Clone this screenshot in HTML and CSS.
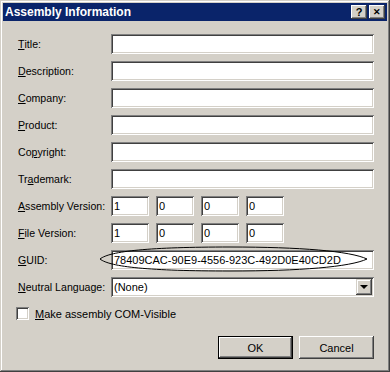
FILE: index.html
```html
<!DOCTYPE html>
<html lang="en">
<head>
  <title>Assembly Information</title>
  <link rel="stylesheet" href="styles.css">
</head>
<body>
  <div class="window">
    <div class="titlebar">
      <span class="title">Assembly Information</span>
      <div class="caption-buttons">
        <span class="cap-btn">?</span>
        <span class="cap-btn cap-close">&#x2715;</span>
      </div>
    </div>

    <div class="form">
      <label><u>T</u>itle:</label>
      <div class="field"></div>

      <label><u>D</u>escription:</label>
      <div class="field"></div>

      <label><u>C</u>ompany:</label>
      <div class="field"></div>

      <label><u>P</u>roduct:</label>
      <div class="field"></div>

      <label>Co<u>p</u>yright:</label>
      <div class="field"></div>

      <label>Tr<u>a</u>demark:</label>
      <div class="field"></div>

      <label><u>A</u>ssembly Version:</label>
      <div class="versions">
        <div class="field">1</div>
        <div class="field">0</div>
        <div class="field">0</div>
        <div class="field">0</div>
      </div>

      <label><u>F</u>ile Version:</label>
      <div class="versions">
        <div class="field">1</div>
        <div class="field">0</div>
        <div class="field">0</div>
        <div class="field">0</div>
      </div>

      <label><u>G</u>UID:</label>
      <div class="field">78409CAC-90E9-4556-923C-492D0E40CD2D</div>

      <label><u>N</u>eutral Language:</label>
      <div class="field combo">
        <span>(None)</span>
        <span class="combo-btn"><span class="arrow"></span></span>
      </div>
    </div>

    <div class="check-row">
      <span class="checkbox"></span>
      <span><u>M</u>ake assembly COM-Visible</span>
    </div>

    <div class="buttons">
      <button class="btn btn-default">OK</button>
      <button class="btn">Cancel</button>
    </div>

    <!-- hand drawn mark around the GUID -->
    <svg class="mark" width="390" height="372" viewBox="0 0 390 372">
      <path d="M100,259 C110,251 150,247 230,247 C300,247 350,251 367,259 C350,267 300,271 230,271 C150,271 110,267 100,259 Z" fill="none" stroke="#000" stroke-width="1"/>
    </svg>
  </div>
</body>
</html>
```

FILE: styles.css
```css
html, body {
  margin: 0;
}
body {
  background: #d4d0c8;
  font-family: "Liberation Sans", Arial, sans-serif;
  font-size: 11px;
  color: #000;
}
.window {
  position: relative;
  width: 390px;
  height: 372px;
  box-sizing: border-box;
  padding: 3px 3px 0 3px;
  background: #d4d0c8;
  box-shadow: inset -1px -1px #404040, inset 1px 1px #d4d0c8,
              inset -2px -2px #808080, inset 2px 2px #fff;
}
.titlebar {
  height: 18px;
  background: #0a246a;
  color: #fff;
  display: flex;
  align-items: center;
  justify-content: space-between;
  padding: 0 2px 0 2px;
}
.title {
  font-weight: bold;
  font-size: 12px;
}
.caption-buttons {
  display: flex;
  gap: 2px;
}
.cap-btn {
  width: 16px;
  height: 14px;
  box-sizing: border-box;
  background: #d4d0c8;
  color: #000;
  font-weight: bold;
  font-size: 11px;
  line-height: 14px;
  text-align: center;
  box-shadow: inset -1px -1px #404040, inset 1px 1px #fff,
              inset -2px -2px #808080;
}
.cap-close {
  font-size: 9px;
}
.form {
  display: grid;
  grid-template-columns: 93px 263px;
  grid-auto-rows: 20px;
  row-gap: 7px;
  margin-top: 13px;
  padding-left: 15px;
}
.form label {
  display: flex;
  align-items: center;
  white-space: nowrap;
  font-size: 10.6px;
}
.field {
  box-sizing: border-box;
  height: 20px;
  background: #fff;
  padding: 0 3px;
  display: flex;
  align-items: center;
  box-shadow: inset 1px 1px #808080, inset -1px -1px #fff,
              inset 2px 2px #404040, inset -2px -2px #d4d0c8;
  white-space: nowrap;
}
.versions {
  display: flex;
  gap: 7px;
}
.versions .field {
  width: 38px;
}
.combo {
  justify-content: space-between;
  padding-right: 2px;
}
.combo-btn {
  width: 16px;
  height: 16px;
  box-sizing: border-box;
  background: #d4d0c8;
  display: flex;
  align-items: center;
  justify-content: center;
  box-shadow: inset -1px -1px #404040, inset 1px 1px #d4d0c8,
              inset -2px -2px #808080, inset 2px 2px #fff;
}
.arrow {
  width: 0;
  height: 0;
  border-left: 4px solid transparent;
  border-right: 4px solid transparent;
  border-top: 4px solid #000;
}
.check-row {
  display: flex;
  align-items: center;
  gap: 6px;
  margin-top: 10px;
  padding-left: 13px;
}
.checkbox {
  width: 13px;
  height: 13px;
  box-sizing: border-box;
  background: #fff;
  box-shadow: inset 1px 1px #808080, inset -1px -1px #fff,
              inset 2px 2px #404040, inset -2px -2px #d4d0c8;
}
.buttons {
  display: flex;
  justify-content: flex-end;
  gap: 6px;
  margin-top: 16px;
  padding-right: 13px;
}
.btn {
  width: 75px;
  height: 23px;
  border: none;
  background: #d4d0c8;
  font-family: inherit;
  font-size: 11px;
  color: #000;
  box-shadow: inset -1px -1px #404040, inset 1px 1px #fff,
              inset -2px -2px #808080;
}
.btn-default {
  box-shadow: inset 0 0 0 1px #000, inset -2px -2px #404040, inset 2px 2px #fff,
              inset -3px -3px #808080;
}
.mark {
  position: absolute;
  left: 0;
  top: 0;
  pointer-events: none;
}
```
